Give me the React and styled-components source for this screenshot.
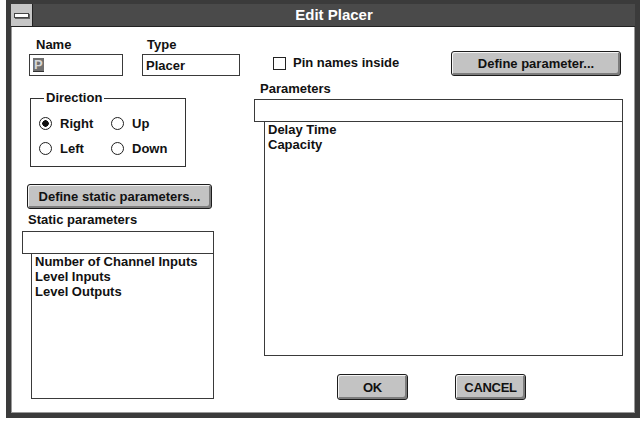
import React from 'react';
import styled, { createGlobalStyle } from 'styled-components';

const GlobalStyle = createGlobalStyle`
  html, body {
    margin: 0;
    padding: 0;
    background: #fff;
  }
  body {
    font-family: "Liberation Sans", Arial, sans-serif;
    font-size: 13px;
    font-weight: bold;
    color: #111;
  }
`;

const Screen = styled.div`
  width: 643px;
  height: 421px;
  padding-left: 6px;
  box-sizing: border-box;
`;

const Window = styled.div`
  width: 634px;
  height: 418px;
  box-sizing: border-box;
  border: 5px solid #3b3b3b;
  border-top-width: 4px;
  background: #fff;
  box-shadow: inset 0 0 0 1px #9a9a9a;
  display: flex;
  flex-direction: column;
`;

const TitleBar = styled.div`
  height: 22px;
  display: flex;
  background: #4a4a4a;
  border-bottom: 1px solid #222;
`;

const SysMenu = styled.div`
  width: 21px;
  background: #c6c6c6;
  border-right: 1px solid #222;
  display: flex;
  align-items: center;
  justify-content: center;
`;

const SysBar = styled.div`
  width: 13px;
  height: 3px;
  background: #fff;
  border: 1px solid #444;
  box-shadow: 1px 1px 0 #666;
`;

const Title = styled.div`
  flex: 1;
  text-align: center;
  color: #fff;
  font-size: 15px;
  line-height: 22px;
`;

const Client = styled.div`
  flex: 1;
  display: flex;
  flex-direction: column;
`;

const TopRow = styled.div`
  display: flex;
  align-items: flex-end;
  padding: 10px 14px 0 18px;
`;

const Field = styled.div`
  display: flex;
  flex-direction: column;
  margin-left: ${p => p.$offset || 0}px;
`;

const FieldLabel = styled.div`
  line-height: 16px;
  padding-left: ${p => p.$indent || 6}px;
  margin-bottom: 1px;
`;

const EditBox = styled.div`
  width: ${p => p.$width}px;
  height: 22px;
  box-sizing: border-box;
  border: 1px solid #3a3a3a;
  display: flex;
  align-items: center;
  padding-left: 3px;
`;

const Selected = styled.span`
  background: #707070;
  color: #d6d6d6;
  line-height: 13px;
  padding: 0 1px;
  border-bottom: 1px solid #333;
`;

const CheckRow = styled.label`
  display: flex;
  align-items: center;
  gap: 7px;
  line-height: 16px;
  margin: 0 0 5px 33px;
`;

const CheckBox = styled.span`
  width: 13px;
  height: 13px;
  box-sizing: border-box;
  border: 1px solid #222;
  background: #fff;
`;

const Button = styled.div`
  width: ${p => p.$width}px;
  height: ${p => p.$height || 25}px;
  box-sizing: border-box;
  background: #c3c3c3;
  border: 1px solid #1c1c1c;
  border-radius: 3px;
  box-shadow: inset 1px 1px 0 #f4f4f4, inset -2px -2px 0 #7c7c7c;
  display: flex;
  align-items: center;
  justify-content: center;
  margin: ${p => p.$margin || '0'};
  letter-spacing: ${p => (p.$tight ? '-0.3px' : '0')};
`;

const Body = styled.div`
  flex: 1;
  display: flex;
  gap: 40px;
  padding: 0 12px 0 11px;
`;

const LeftCol = styled.div`
  width: 192px;
  display: flex;
  flex-direction: column;
  align-items: flex-start;
`;

const RightCol = styled.div`
  flex: 1;
  display: flex;
  flex-direction: column;
`;

const Group = styled.fieldset`
  width: 156px;
  box-sizing: border-box;
  margin: 15px 0 0 8px;
  padding: 6px 0 5px 8px;
  border: 1px solid #333;
  min-width: 0;
`;

const Legend = styled.legend`
  margin-left: 5px;
  padding: 0 2px;
  line-height: 14px;
`;

const RadioGrid = styled.div`
  display: grid;
  grid-template-columns: 72px auto;
  grid-auto-rows: 25px;
`;

const RadioItem = styled.label`
  display: flex;
  align-items: center;
  gap: 8px;
`;

const RadioDot = styled.span`
  width: 13px;
  height: 13px;
  box-sizing: border-box;
  border-radius: 50%;
  border: 1px solid #1f1f1f;
  background: ${p =>
    p.$on ? 'radial-gradient(circle, #111 0 3px, #fff 3.5px)' : '#fff'};
`;

const Label = styled.div`
  line-height: 16px;
  margin: ${p => p.$top}px 0 0 6px;
`;

const ComboEdit = styled.div`
  align-self: stretch;
  height: 23px;
  box-sizing: border-box;
  border: 1px solid #3a3a3a;
  margin-top: ${p => p.$top}px;
`;

const ComboList = styled.div`
  align-self: stretch;
  height: ${p => p.$height}px;
  box-sizing: border-box;
  margin-left: ${p => p.$indent}px;
  border: 1px solid #3a3a3a;
  border-top: none;
  padding-left: 3px;
  line-height: 15px;
`;

const ButtonRow = styled.div`
  display: flex;
  justify-content: center;
  gap: 47px;
  margin-top: 18px;
  padding-right: 14px;
`;

const Radio = ({ on, children }) => (
  <RadioItem>
    <RadioDot $on={on} />
    {children}
  </RadioItem>
);

export default function App() {
  return (
    <>
      <GlobalStyle />
      <Screen>
        <Window>
          <TitleBar>
            <SysMenu>
              <SysBar />
            </SysMenu>
            <Title>Edit Placer</Title>
          </TitleBar>
          <Client>
            <TopRow>
              <Field>
                <FieldLabel $indent={7}>Name</FieldLabel>
                <EditBox $width={94}>
                  <Selected>P</Selected>
                </EditBox>
              </Field>
              <Field $offset={19}>
                <FieldLabel $indent={5}>Type</FieldLabel>
                <EditBox $width={98}>Placer</EditBox>
              </Field>
              <CheckRow>
                <CheckBox />
                Pin names inside
              </CheckRow>
              <Button $width={170} $margin="0 0 0 auto">Define parameter...</Button>
            </TopRow>
            <Body>
              <LeftCol>
                <Group>
                  <Legend>Direction</Legend>
                  <RadioGrid>
                    <Radio on>Right</Radio>
                    <Radio>Up</Radio>
                    <Radio>Left</Radio>
                    <Radio>Down</Radio>
                  </RadioGrid>
                </Group>
                <Button $width={185} $margin="17px 0 0 5px">
                  Define static parameters...
                </Button>
                <Label $top={3}>Static parameters</Label>
                <ComboEdit $top={3} />
                <ComboList $indent={9} $height={145}>
                  <div>Number of Channel Inputs</div>
                  <div>Level Inputs</div>
                  <div>Level Outputs</div>
                </ComboList>
              </LeftCol>
              <RightCol>
                <Label $top={5}>Parameters</Label>
                <ComboEdit $top={2} />
                <ComboList $indent={10} $height={234}>
                  <div>Delay Time</div>
                  <div>Capacity</div>
                </ComboList>
                <ButtonRow>
                  <Button $width={71} $height={26} $tight>OK</Button>
                  <Button $width={71} $height={26} $tight>CANCEL</Button>
                </ButtonRow>
              </RightCol>
            </Body>
          </Client>
        </Window>
      </Screen>
    </>
  );
}
